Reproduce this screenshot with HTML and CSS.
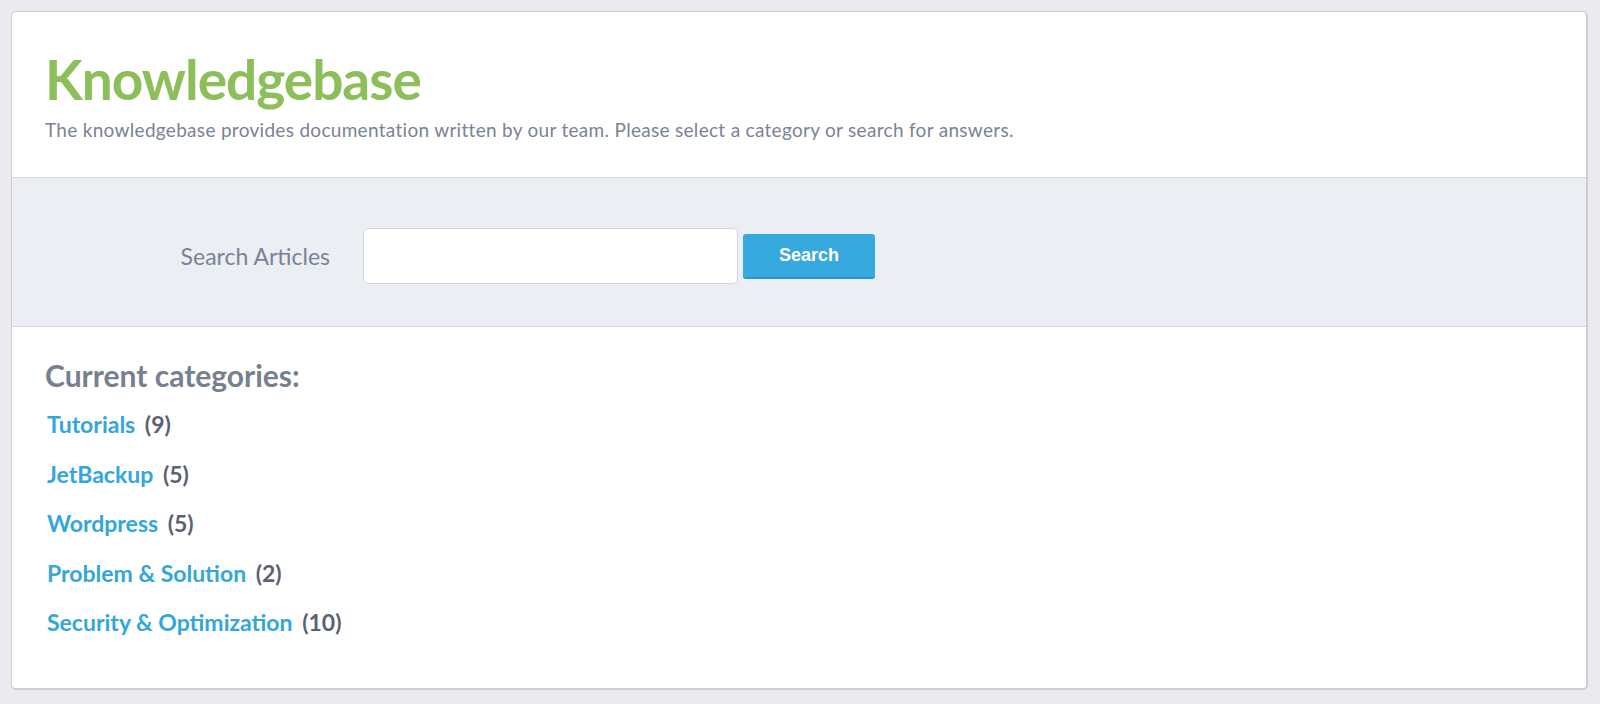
FILE: index.html
```html
<!DOCTYPE html>
<html lang="en">
<head>
<meta charset="utf-8">
<title>Knowledgebase</title>
<link rel="stylesheet" href="styles.css">
</head>
<body>
<div class="card">
  <header class="kb-header">
    <h1 class="kb-title">Knowledgebase</h1>
    <p class="kb-intro">The knowledgebase provides documentation written by our team. Please select a category or search for answers.</p>
  </header>
  <form class="kb-search">
    <label class="kb-label" for="q">Search Articles</label>
    <input class="kb-input" id="q" type="text">
    <button class="kb-btn" type="button">Search</button>
  </form>
  <section class="kb-cats">
    <h2 class="kb-cats-title">Current categories:</h2>
    <ul class="kb-list">
      <li><a href="#">Tutorials</a> <span class="count">(9)</span></li>
      <li><a href="#">JetBackup</a> <span class="count">(5)</span></li>
      <li><a href="#">Wordpress</a> <span class="count">(5)</span></li>
      <li><a href="#">Problem &amp; Solution</a> <span class="count">(2)</span></li>
      <li><a href="#">Security &amp; Optimization</a> <span class="count">(10)</span></li>
    </ul>
  </section>
</div>
</body>
</html>
```

FILE: styles.css
```css
html, body {
  margin: 0;
  padding: 0;
  background: #ebebef;
  font-family: Lato, "Open Sans", sans-serif;
}
body {
  padding: 11px 12px 15px 11px;
}
.card {
  background: #fff;
  border: 1px solid #cdcdd1;
  border-right-width: 2px;
  border-bottom-width: 2px;
  border-radius: 5px;
  height: 676px;
  box-sizing: content-box;
  overflow: hidden;
}
.kb-header {
  padding: 34px 33px 0;
  height: 131px;
  border-bottom: 1px solid #d6d6da;
}
.kb-title {
  margin: 0;
  font-size: 55px;
  font-weight: 700;
  letter-spacing: -1px;
  line-height: 66px;
  color: #8cbe59;
}
.kb-intro {
  margin: 6px 0 0;
  font-size: 19px;
  letter-spacing: 0.3px;
  line-height: 24px;
  color: #7a8396;
}
.kb-search {
  display: flex;
  align-items: center;
  background: #ebeef2;
  border-bottom: 1px solid #d6d6da;
  padding: 50px 0 42px;
  margin: 0;
}
.kb-label {
  width: 318px;
  text-align: right;
  font-size: 23px;
  color: #7a8396;
  padding-right: 33px;
  box-sizing: content-box;
}
.kb-input {
  width: 375px;
  height: 56px;
  box-sizing: border-box;
  border: 1px solid #d3d5d9;
  border-radius: 5px;
  background: #fff;
  margin: 0;
  padding: 6px 12px;
  font-size: 18px;
}
.kb-btn {
  margin-left: 5px;
  width: 132px;
  height: 45px;
  border: 0;
  border-bottom: 2px solid #2b96cc;
  border-radius: 3px;
  background: #36a9de;
  color: #fff;
  font-family: "Liberation Sans", Arial, sans-serif;
  font-weight: 700;
  font-size: 18px;
  padding: 0;
}
.kb-cats {
  padding: 31px 33px 0;
}
.kb-cats-title {
  margin: 0;
  font-size: 30px;
  font-weight: 700;
  line-height: 34px;
  color: #76808f;
}
.kb-list {
  list-style: none;
  margin: 8px 0 0;
  padding: 0 0 0 2px;
}
.kb-list li {
  font-size: 23px;
  font-weight: 700;
  line-height: 49.5px;
  color: #5a6272;
}
.kb-list a {
  color: #33a6dc;
  text-decoration: none;
}
.count {
  margin-left: 4px;
}
```
